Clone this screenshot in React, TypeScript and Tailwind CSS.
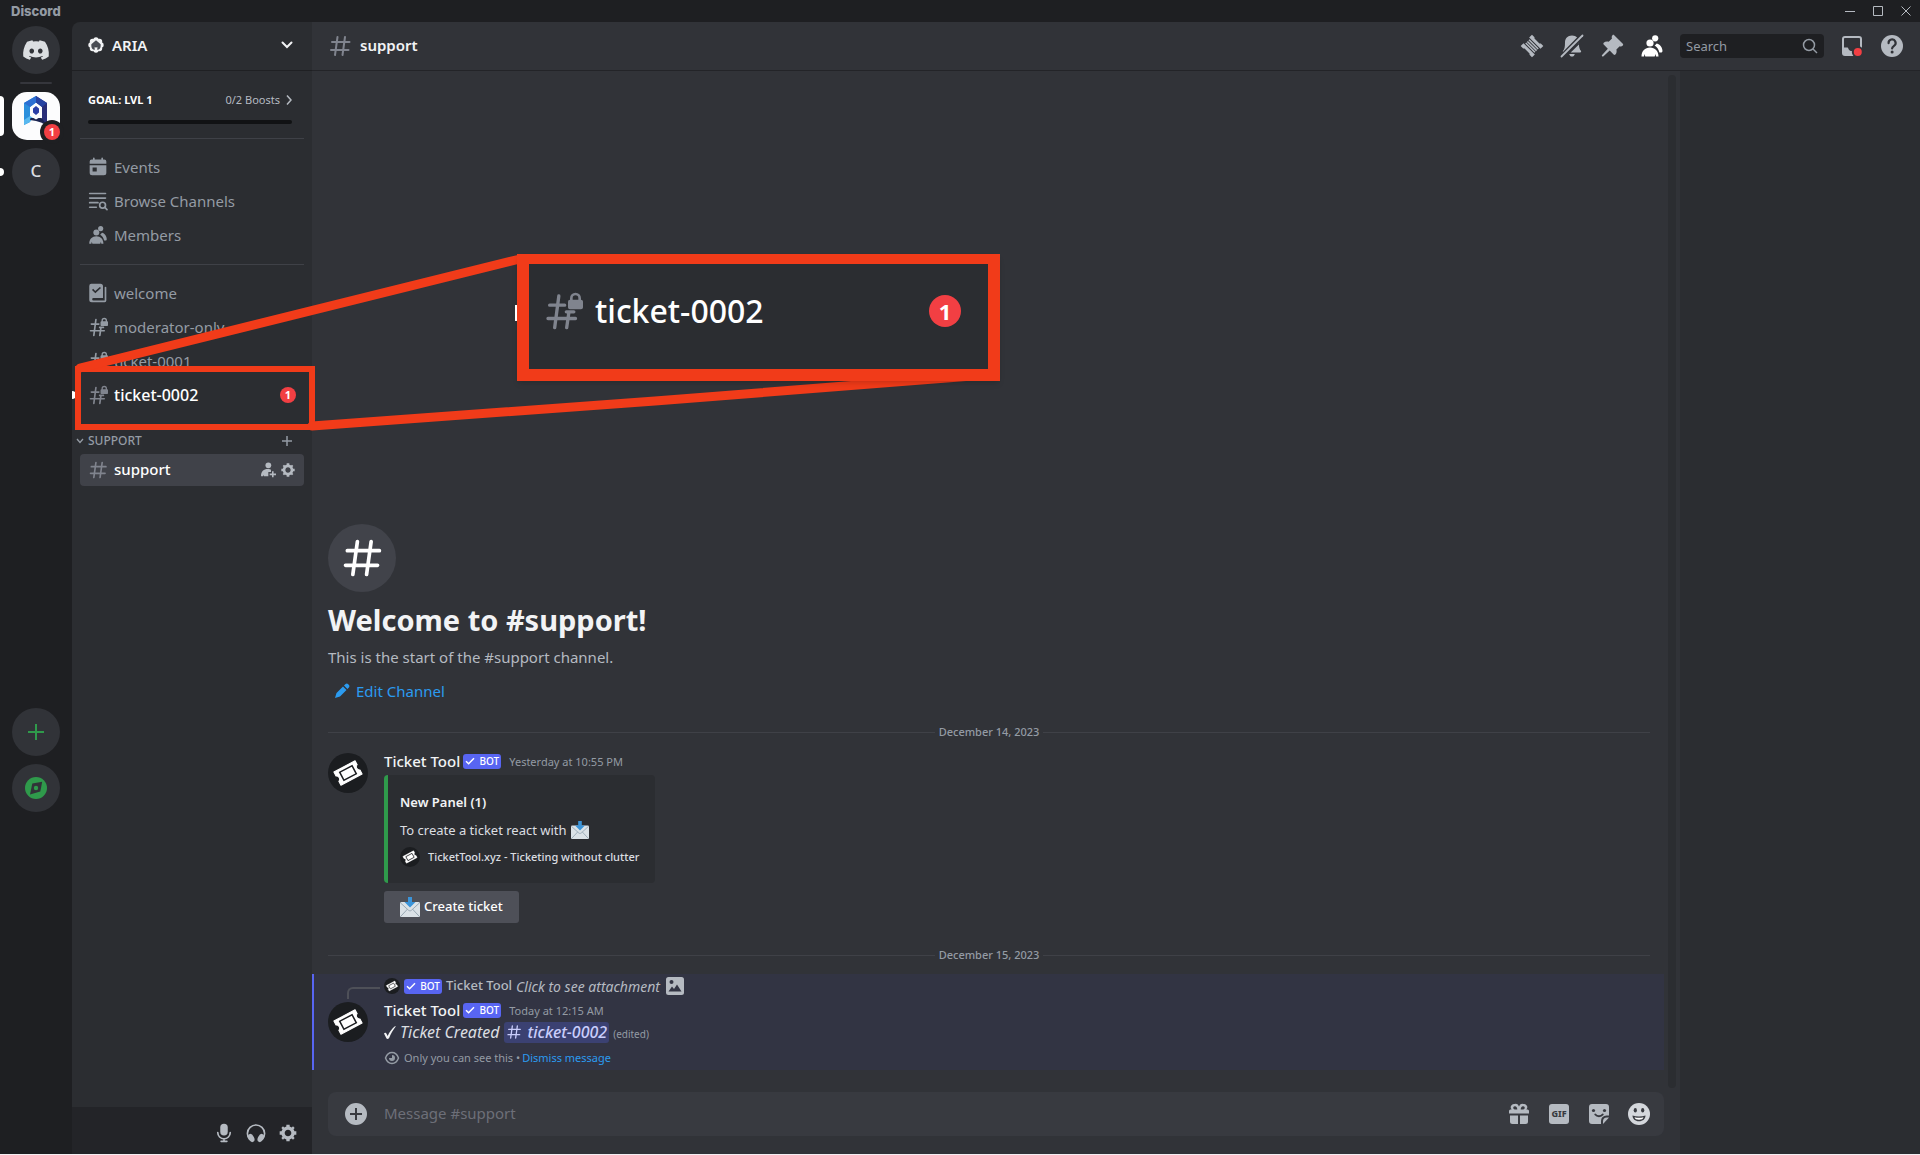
import type { ReactNode } from "react";
import { FaDiscord } from "react-icons/fa";

type IconProps = { className?: string };

function Svg({ className, children, stroke }: { className?: string; children: ReactNode; stroke?: boolean }) {
  return (
    <svg
      viewBox="0 0 24 24"
      className={className}
      aria-hidden="true"
      fill={stroke ? "none" : "currentColor"}
      stroke={stroke ? "currentColor" : "none"}
      strokeWidth={2}
      strokeLinecap="round"
      strokeLinejoin="round"
    >
      {children}
    </svg>
  );
}

const Hash = ({ className }: IconProps) => (
  <Svg className={className} stroke>
    <path d="M9.5 3 7 21M17 3l-2.500 18M4 8h17.500M3 16h17.500" />
  </Svg>
);

const HashLock = ({ className }: IconProps) => (
  <Svg className={className}>
    <g fill="none" stroke="currentColor" strokeWidth="2" strokeLinecap="round">
      <path d="M9.500 3 7 22M15.500 13 14.200 22M4 8.500h9M3 16.500h16.500M14 12.500h4.500" />
    </g>
    <path
      fillRule="evenodd"
      d="M19.500 1a3.300 3.300 0 0 0-3.300 3.300V5.200a1.200 1.200 0 0 0-1.200 1.200v3.300c0 .700.500 1.200 1.200 1.200h6.600c.700 0 1.200-.500 1.200-1.200V6.400c0-.700-.500-1.200-1.200-1.200V4.300A3.300 3.300 0 0 0 19.500 1Zm-1.700 4.200V4.300a1.700 1.700 0 0 1 3.400 0v.900Z"
    />
  </Svg>
);

const Gear = ({ className }: IconProps) => (
  <Svg className={className}>
    <path
      fillRule="evenodd"
      d="M19.738 10H22V14H19.739C19.498 14.931 19.1 15.798 18.565 16.564L20 18L18 20L16.565 18.564C15.797 19.099 14.932 19.498 14 19.738V22H10V19.738C9.069 19.498 8.203 19.099 7.436 18.564L6 20L4 18L5.436 16.564C4.901 15.799 4.502 14.932 4.262 14H2V10H4.262C4.502 9.068 4.9 8.202 5.436 7.436L4 6L6 4L7.436 5.436C8.202 4.9 9.068 4.502 10 4.262V2H14V4.261C14.932 4.502 15.797 4.9 16.565 5.435L18 3.999L20 5.999L18.564 7.436C19.099 8.202 19.498 9.069 19.738 10ZM12 16C14.2091 16 16 14.2091 16 12C16 9.79086 14.2091 8 12 8C9.79086 8 8 9.79086 8 12C8 14.2091 9.79086 16 12 16Z"
    />
  </Svg>
);

const People = ({ className }: IconProps) => (
  <Svg className={className}>
    <circle cx="10" cy="9" r="3.600" />
    <path d="M1.500 22.500c0-5.500 3.500-9 8.500-9s8.500 3.500 8.500 9h-2.500l-.500-2.500-.800 2.500H5.300l-.800-2.500-.500 2.500Z" />
    <circle cx="15.200" cy="4.300" r="3.100" />
    <path d="M14.600 11.600c1.200-.900 1.800-2 2.300-2.200 3 .800 5.600 4 5.600 7.600 0 .900-.600 1.500-1.500 1.500h-1.600c-.800-3.100-2.400-5.500-4.800-6.900Z" />
  </Svg>
);

const Calendar = ({ className }: IconProps) => (
  <Svg className={className}>
    <path d="M6 1.500a1 1 0 0 1 2 0V3h8V1.500a1 1 0 0 1 2 0V3h1.500A2.500 2.500 0 0 1 22 5.500V8H2V5.500A2.500 2.500 0 0 1 4.500 3H6Z" />
    <path
      fillRule="evenodd"
      d="M2 10h20v9a3 3 0 0 1-3 3H5a3 3 0 0 1-3-3Zm3.500 2.500v5h5v-5Z"
    />
  </Svg>
);

const Browse = ({ className }: IconProps) => (
  <Svg className={className} stroke>
    <path d="M2 3h19M2 8.500h19M2 14h10M2 19.500h8" />
    <circle cx="17.500" cy="17" r="3.500" />
    <path d="m20.200 19.700 2.600 2.600" />
  </Svg>
);

const Rules = ({ className }: IconProps) => (
  <Svg className={className}>
    <path
      fillRule="evenodd"
      d="M4 1h11a3 3 0 0 1 3 3v14H6.500a1.500 1.500 0 0 0 0 3H20V5.500a1 1 0 0 1 2 0V21a2 2 0 0 1-2 2H4.500A3 3 0 0 1 1.500 20V3.500A2.500 2.500 0 0 1 4 1Zm.800 7.300 4 4L15.600 6 14.200 4.700 8.700 9.600 6.200 7Z"
    />
  </Svg>
);

const Threads = ({ className }: IconProps) => (
  <Svg className={className}>
    <g transform="rotate(45 12 12)">
      <path d="M4 4h3.500l1 1h7l1-1H20v4H4Z" />
      <path d="M4 16h16v4h-3.500l-1-1h-7l-1 1H4Z" />
      <path d="M5.500 9h13v1.500h-13ZM5.500 11.300h13v1.500h-13ZM5.500 13.600h13v1.500h-13Z" />
    </g>
  </Svg>
);

const BellOff = ({ className }: IconProps) => (
  <Svg className={className}>
    <path d="M12 1.500c4.500 0 7 3.200 7 7v.300L5.500 18.500H3.800c-.800 0-1.300-1-.700-1.700C4.500 15 5 13 5 8.500c0-3.800 2.500-7 7-7Z" />
    <path d="M18.900 10.600c.200 3.300.800 4.900 2 6.200.600.700.100 1.700-.700 1.700H10.700ZM9.200 20h5.600c-.400 1.600-1.400 2.600-2.800 2.600S9.600 21.600 9.200 20Z" />
    <path d="M22.500 1.500 2 22.500" stroke="#313338" strokeWidth="5" />
    <path d="M22.500 1.500 1.500 22.500" stroke="currentColor" strokeWidth="1.800" strokeLinecap="round" />
  </Svg>
);

const Pin = ({ className }: IconProps) => (
  <Svg className={className}>
    <path d="M12.500 1.200c.500-.500 1.200-.500 1.700 0l8.600 8.600c.500.500.500 1.200 0 1.700-.900.900-2.100 1.100-3.100.700l-3.300 3.300c.500 1.800.200 3.700-1 5-.500.500-1.300.500-1.800 0l-3.900-3.900-6.200 5.700c-.400.400-1 .400-1.400 0s-.400-1 0-1.400l5.700-6.200-4.100-4.100c-.500-.500-.500-1.300 0-1.800 1.300-1.200 3.200-1.500 5-1l3.300-3.300c-.500-1-.400-2.400.500-3.300Z" />
  </Svg>
);

const Compass = ({ className }: IconProps) => (
  <Svg className={className}>
    <circle cx="12" cy="12" r="11" />
    <path fill="#313338" d="M8.300 7.600 18.200 5.700l-1.900 9.800L6 18.500Z" />
    <circle cx="12" cy="12" r="2.200" />
  </Svg>
);

const Mic = ({ className }: IconProps) => (
  <Svg className={className}>
    <rect x="7.500" y="1" width="9" height="14" rx="4.500" />
    <path d="M4.500 11.500a7.500 7.500 0 0 0 15 0M12 19v3.200M8.500 22h7" fill="none" stroke="currentColor" strokeWidth="2" strokeLinecap="round" />
  </Svg>
);

const Headphones = ({ className }: IconProps) => (
  <Svg className={className}>
    <path d="M4.300 19.500A10.300 10.300 0 1 1 19.700 19.500" fill="none" stroke="currentColor" strokeWidth="2" />
    <ellipse cx="6.300" cy="18" rx="3.300" ry="5.200" transform="rotate(-28 6.300 18)" />
    <ellipse cx="17.700" cy="18" rx="3.300" ry="5.200" transform="rotate(28 17.700 18)" />
  </Svg>
);

const Invite = ({ className }: IconProps) => (
  <Svg className={className}>
    <circle cx="12.500" cy="5" r="4.300" />
    <path d="M1.500 20.500c0-6 4-10 10-10 2.500 0 4.500.700 5 1.200V15H12.500v6.500H5.800L5.300 19l-.800 2.500h-2c-.600 0-1-.400-1-1Z" />
    <path d="M18 14h2.400v3.300h3.600v2.400h-3.600V23H18v-3.300h-3.500v-2.400H18Z" />
  </Svg>
);

const Inbox = ({ className }: IconProps) => (
  <Svg className={className}>
    <path
      fillRule="evenodd"
      d="M5 2h14a3 3 0 0 1 3 3v14a3 3 0 0 1-3 3H5a3 3 0 0 1-3-3V5a3 3 0 0 1 3-3Zm-1 2.800V13.500h3c.800 0 1.200.500 1.400 1.200.500 1.500 1.900 2.300 3.600 2.300 2 0 3.200-.900 3.700-2.400.2-.700.600-1.100 1.300-1.100h3V4.800a.800.800 0 0 0-.800-.800H4.800a.800.800 0 0 0-.8.800Z"
    />
    <circle cx="17.800" cy="18" r="6" fill="#313338" />
    <circle cx="17.800" cy="18" r="4" fill="#f23f43" />
  </Svg>
);

const Help = ({ className }: IconProps) => (
  <Svg className={className}>
    <circle cx="12" cy="12" r="11" />
    <path d="M8.600 9.200A3.500 3.500 0 1 1 14 11.800c-1.300.900-1.900 1.400-1.900 2.700" fill="none" stroke="#313338" strokeWidth="2.200" strokeLinecap="round" />
    <circle cx="12.100" cy="18" r="1.500" fill="#313338" />
  </Svg>
);

const Gift = ({ className }: IconProps) => (
  <Svg className={className}>
    <path
      fillRule="evenodd"
      d="M7.500 2A3.600 3.600 0 0 1 12 4.500 3.600 3.600 0 0 1 16.500 2 3.300 3.300 0 0 1 19.400 7.500h1.100A1.500 1.500 0 0 1 22 9v2.500H2V9a1.500 1.500 0 0 1 1.500-1.500h1.100A3.300 3.300 0 0 1 7.500 2Zm.200 2.200a1.600 1.600 0 0 0 .400 3.300h2.200c-.100-2-.900-3.500-2.600-3.300Zm8.600 0c-1.700-.200-2.500 1.300-2.600 3.300h2.200a1.600 1.600 0 0 0 .400-3.300Z"
    />
    <path d="M3 13.500h8V22H5.500A2.500 2.500 0 0 1 3 19.500ZM13 13.500h8v6a2.500 2.500 0 0 1-2.500 2.500H13Z" />
  </Svg>
);

const Sticker = ({ className }: IconProps) => (
  <Svg className={className}>
    <path d="M5 2h14a3 3 0 0 1 3 3v8.500h-2.500a5.500 5.500 0 0 0-5.500 5.500v3H5a3 3 0 0 1-3-3V5a3 3 0 0 1 3-3Z" />
    <path d="M16 22v-2.500a4 4 0 0 1 4-4h2Z" />
    <circle cx="6.500" cy="8.500" r="1.600" fill="#383a40" />
    <circle cx="17.500" cy="8.500" r="1.600" fill="#383a40" />
    <path d="M8.300 12.500c1.800 2.300 5.600 2.300 7.400 0" fill="none" stroke="#383a40" strokeWidth="2" strokeLinecap="round" />
  </Svg>
);

const Smile = ({ className }: IconProps) => (
  <Svg className={className}>
    <circle cx="12" cy="12" r="11" fill="#d4d7dc" />
    <ellipse cx="8.300" cy="8.300" rx="1.600" ry="2.300" fill="#383a40" />
    <ellipse cx="15.700" cy="8.300" rx="1.600" ry="2.300" fill="#383a40" />
    <path d="M5.500 13.500c4 1.300 9 1.300 13 0 0 3.300-2.700 5.800-6.500 5.800s-6.500-2.500-6.500-5.800Z" fill="#383a40" />
    <path d="M7.500 15.200c3 .800 6 .800 9 0-.300 1-.900 1.600-1.500 2-2 .600-4 .600-6 0-.600-.400-1.200-1-1.500-2Z" fill="#fff" />
  </Svg>
);

const ServerBadge = ({ className }: IconProps) => (
  <Svg className={className}>
    {[
      [12, 4.5], [17.300, 6.700], [19.500, 12], [17.300, 17.300], [12, 19.500], [6.700, 17.300], [4.500, 12], [6.700, 6.700],
    ].map(([x, y]) => (
      <circle key={`${x}-${y}`} cx={x} cy={y} r="4" />
    ))}
    <path d="M12 5 5 11v2.500C5 17 7 19 10 19.500V14.500h4v5c3-.500 5-2.500 5-6V11Z" fill="#4a4d55" />
  </Svg>
);

const AriaLogo = ({ className }: IconProps) => (
  <svg viewBox="0 0 48 48" className={className} aria-hidden="true">
    <rect width="48" height="48" rx="15" fill="#fcfcfd" />
    <path d="M24 4 12 11v22l6-3V15l6-4.500Z" fill="#2b8fdc" />
    <path d="M24 4 35 11v22l-5-2V15l-6-4.500Z" fill="#2a2e78" />
    <path d="M24 4 12 11l6 4 6-4.500Z" fill="#2c6fd2" />
    <path d="M24 4 35 11l-5 4-6-4.500Z" fill="#2743a3" />
    <path d="M12 28v5l6-3 3-4-3-2Z" fill="#58b8ef" />
    <path d="M21 16.500 24 14l3 2.500v4L24 23l-3-2.500Z" fill="#2b3ea6" />
    <path d="M18.500 26h3l2.500 1.500L26.500 26h3l5.500 7-6-2.500-5-1.500-6-1Z" fill="#1b2450" />
  </svg>
);

const TicketGlyph = ({ className }: IconProps) => (
  <svg viewBox="0 0 40 40" className={className} aria-hidden="true">
    <circle cx="20" cy="20" r="20" fill="#1b1d20" />
    <g transform="rotate(-28 20 20)">
      <path d="M8 12.500h24v4.500a3.200 3.200 0 0 0 0 6v4.500H8V23a3.200 3.200 0 0 0 0-6Z" fill="#fff" stroke="#fff" strokeLinejoin="round" />
      <rect x="13" y="15.500" width="14" height="9" fill="#fff" stroke="#1b1d20" strokeWidth="1.500" />
    </g>
  </svg>
);

const MailEmoji = ({ className }: IconProps) => (
  <svg viewBox="0 0 20 20" className={className} aria-hidden="true">
    <rect x="0" y="5" width="20" height="15" rx="1.500" fill="#dbe2e7" />
    <path d="m.6 19.500 7-7.500M19.400 19.500l-7-7.500M.6 6l8 7.300c.8.700 2 .700 2.800 0L19.400 6" fill="none" stroke="#99a9b5" strokeWidth="1" />
    <path d="M8 0h4v5h3.500L10 10.500 4.500 5H8Z" fill="#3b94d9" />
  </svg>
);

function Divider({ label }: { label: string }) {
  return (
    <div className="mr-[14px] ml-4 flex h-4 items-center gap-1">
      <span className="h-px flex-1 bg-[#3f4147]" />
      <span className="text-[11px] leading-4 font-medium text-[#949ba4]">{label}</span>
      <span className="h-px flex-1 bg-[#3f4147]" />
    </div>
  );
}

function BotTag() {
  return (
    <span className="flex h-[15px] w-[38px] shrink-0 items-center justify-center gap-1 rounded-[3px] bg-[#5865f2] text-[10px] leading-[15px] font-medium text-white">
      <svg viewBox="0 0 10 8" className="h-2 w-2.5" fill="none" stroke="currentColor" strokeWidth="1.500" aria-hidden="true">
        <path d="M1 4.200 3.600 6.700 9 1.300" />
      </svg>
      BOT
    </span>
  );
}

function NavRow({ icon, label, active }: { icon: ReactNode; label: string; active?: boolean }) {
  return (
    <a
      href="#"
      className={
        active
          ? "flex h-8 items-center gap-1.5 px-2 text-[16px] font-medium text-white"
          : "flex h-8 items-center gap-1.5 px-2 text-[15px] text-[#949ba4]"
      }
    >
      {icon}
      <span className="flex-1">{label}</span>
      {active && (
        <span className="flex size-4 items-center justify-center rounded-full bg-[#f23f43] text-[11px] leading-4 font-bold">1</span>
      )}
    </a>
  );
}

function Rail() {
  return (
    <nav aria-label="Servers" className="flex w-[72px] shrink-0 flex-col items-center pt-1">
      <button aria-label="Direct messages" className="flex size-12 items-center justify-center rounded-full bg-[#313338] text-[#dbdee1]">
        <FaDiscord className="size-7" />
      </button>
      <span className="mt-2 h-0.5 w-8 rounded bg-[#35363c]" />
      <div className="relative mt-2 flex w-full justify-center">
        <span className="absolute top-1 left-0 h-10 w-1 rounded-r bg-white" />
        <button aria-label="ARIA" className="relative size-12">
          <AriaLogo className="size-12" />
          <span className="absolute -right-1 -bottom-1 flex size-6 items-center justify-center rounded-full bg-[#1e1f22]">
            <span className="flex size-4 items-center justify-center rounded-full bg-[#f23f43] text-[11px] leading-4 font-bold text-white">1</span>
          </span>
        </button>
      </div>
      <div className="relative mt-2 flex w-full justify-center">
        <span className="absolute top-5 left-0 h-2 w-1 rounded-r bg-white" />
        <button className="size-12 rounded-full bg-[#313338] pb-0.5 text-[17px] font-medium text-[#dbdee1]">C</button>
      </div>
      <div className="mt-[512px] flex flex-col gap-2">
        <button aria-label="Add a server" className="flex size-12 items-center justify-center rounded-full bg-[#313338] text-[#2f9a4b]">
          <svg viewBox="0 0 16 16" className="size-4" stroke="currentColor" strokeWidth="2" aria-hidden="true">
            <path d="M8 0v16M0 8h16" />
          </svg>
        </button>
        <button aria-label="Explore servers" className="flex size-12 items-center justify-center rounded-full bg-[#313338] text-[#2f9a4b]">
          <Compass className="size-6" />
        </button>
      </div>
    </nav>
  );
}

function Sidebar() {
  return (
    <aside className="flex w-60 shrink-0 flex-col rounded-tl-lg bg-[#2b2d31]">
      <button className="flex h-[49px] shrink-0 items-center border-b border-[#1f2023] pr-[19px] pb-0.5 pl-4 text-left text-[15px] font-semibold text-[#f2f3f5]">
        <ServerBadge className="mr-2 size-4" />
        <span className="flex-1">ARIA</span>
        <svg viewBox="0 0 12 8" className="h-2 w-3" fill="none" stroke="currentColor" strokeWidth="2" strokeLinecap="round" aria-hidden="true">
          <path d="m1.500 1.500 4.500 4.500 4.500-4.500" />
        </svg>
      </button>
      <div className="mx-2 border-b border-[#3f4147] px-2 pt-[19px] pb-[14px]">
        <div className="flex items-center text-[11px] leading-5">
          <span className="flex-1 font-bold text-white">GOAL: LVL 1</span>
          <a href="#" className="flex items-center gap-1.5 text-[#b5bac1]">
            0/2 Boosts
            <svg viewBox="0 0 6 10" className="mr-1 h-2.5 w-1.5" fill="none" stroke="currentColor" strokeWidth="1.500" aria-hidden="true">
              <path d="m1 .5 4 4.500-4 4.500" />
            </svg>
          </a>
        </div>
        <div className="mt-2.5 mr-1 h-1 rounded bg-[#111214]" />
      </div>
      <div className="mx-2 mt-3 flex flex-col gap-0.5 border-b border-[#3f4147] pb-[13px]">
        <NavRow icon={<Calendar className="size-5" />} label="Events" />
        <NavRow icon={<Browse className="size-5" />} label="Browse Channels" />
        <NavRow icon={<People className="size-5" />} label="Members" />
      </div>
      <div className="mx-2 mt-3 flex flex-col gap-0.5">
        <NavRow icon={<Rules className="size-5" />} label="welcome" />
        <NavRow icon={<HashLock className="size-5" />} label="moderator-only" />
        <NavRow icon={<HashLock className="size-5" />} label="ticket-0001" />
        <div className="relative">
          <span className="absolute top-3 -left-2 h-2 w-1 rounded-r bg-white" />
          <NavRow icon={<HashLock className="size-5 text-[#80848e]" />} label="ticket-0002" active />
        </div>
      </div>
      <div className="mt-[18px] flex h-6 items-center pr-5 pl-1 text-[#949ba4]">
        <svg viewBox="0 0 8 6" className="mr-1 h-1.5 w-2" fill="none" stroke="currentColor" strokeWidth="1.300" aria-hidden="true">
          <path d="m1 1 3 3.500L7 1" />
        </svg>
        <span className="flex-1 text-[12px] font-medium">SUPPORT</span>
        <button aria-label="Create channel">
          <svg viewBox="0 0 10 10" className="size-2.5" stroke="currentColor" strokeWidth="1.500" aria-hidden="true">
            <path d="M5 0v10M0 5h10" />
          </svg>
        </button>
      </div>
      <div className="mx-2 mt-px flex h-8 items-center gap-1 rounded bg-[#404249] px-2 text-[#b5bac1]">
        <Hash className="mr-0.5 size-5 text-[#80848e]" />
        <a href="#" className="flex-1 pb-0.5 text-[15px] font-medium text-white">support</a>
        <button aria-label="Create invite"><Invite className="size-4" /></button>
        <button aria-label="Edit channel"><Gear className="size-4" /></button>
      </div>
      <div className="mt-auto flex h-[47px] items-start justify-end gap-3 bg-[#232428] pt-4 pr-[14px] text-[#b5bac1]">
        <button aria-label="Mute"><Mic className="size-5" /></button>
        <button aria-label="Deafen"><Headphones className="size-5" /></button>
        <button aria-label="User settings"><Gear className="size-5" /></button>
      </div>
    </aside>
  );
}

function ChatHeader() {
  return (
    <header className="flex h-[49px] shrink-0 items-center gap-4 border-b border-[#232428] bg-[#313338] px-4 text-[#b5bac1]">
      <div className="flex flex-1 items-center gap-2">
        <Hash className="size-6 text-[#80848e]" />
        <h2 className="pb-0.5 text-[15px] font-semibold text-[#f2f3f5]">support</h2>
      </div>
      <button aria-label="Threads"><Threads className="size-6" /></button>
      <button aria-label="Notification settings"><BellOff className="size-6" /></button>
      <button aria-label="Pinned messages"><Pin className="size-6" /></button>
      <button aria-label="Show member list"><People className="size-6 text-white" /></button>
      <label className="flex h-6 w-36 items-center rounded bg-[#1e1f22] px-1.5">
        <input aria-label="Search" placeholder="Search" className="w-0 flex-1 bg-transparent pt-0.5 text-[13px] outline-none placeholder:text-[#949ba4]" />
        <svg viewBox="0 0 16 16" className="size-4" fill="none" stroke="#949ba4" strokeWidth="1.500" aria-hidden="true">
          <circle cx="7" cy="7" r="5.500" />
          <path d="m11 11 4 4" />
        </svg>
      </label>
      <button aria-label="Inbox"><Inbox className="size-6" /></button>
      <button aria-label="Help"><Help className="size-6" /></button>
    </header>
  );
}

function Messages() {
  return (
    <div className="relative flex min-h-0 flex-1 flex-col justify-end pr-4 pb-[22px]">
      <span className="absolute top-1 right-1 bottom-1 w-2 rounded bg-[#2b2d31]" />
      <section className="pl-4">
        <div className="flex size-[68px] items-center justify-center rounded-full bg-[#41434a] text-white">
          <Hash className="size-11" />
        </div>
        <h1 className="mt-2 text-[29px] leading-10 font-bold text-[#f2f3f5]">Welcome to #support!</h1>
        <p className="mt-[7px] text-[15px] leading-5 text-[#b5bac1]">This is the start of the #support channel.</p>
        <button className="mt-2 flex h-8 items-center gap-1.5 pl-1.5 text-[15px] text-[#2b9bf0]">
          <svg viewBox="0 0 16 16" className="size-4" fill="currentColor" aria-hidden="true">
            <path d="M9 3.500 12.500 7 6 13.500 1 15l1.500-5ZM10 2.600l1.600-1.500c.7-.7 1.700-.7 2.400 0l.900.900c.7.700.7 1.700 0 2.400L13.400 6Z" />
          </svg>
          Edit Channel
        </button>
      </section>
      <div className="mt-[17px]"><Divider label="December 14, 2023" /></div>
      <article className="mt-2.5 flex gap-4 pl-4">
        <TicketGlyph className="mt-[3px] size-10 shrink-0" />
        <div>
          <div className="flex h-[22px] items-center">
            <span className="text-[15px] font-medium text-[#f2f3f5]">Ticket Tool</span>
            <span className="mr-2 ml-[3px]"><BotTag /></span>
            <time className="pt-0.5 text-[11px] text-[#949ba4]">Yesterday at 10:55 PM</time>
          </div>
          <div className="mt-[3px] w-fit rounded border-l-4 border-[#2f9a4b] bg-[#2b2d31] pt-[17px] pr-4 pb-4 pl-3">
            <h3 className="text-[13px] leading-5 font-semibold text-[#f2f3f5]">New Panel (1)</h3>
            <p className="mt-2 flex items-center gap-1 text-[13px] leading-5 text-[#dbdee1]">
              To create a ticket react with
              <MailEmoji className="size-[18px]" />
            </p>
            <div className="mt-[7px] flex h-5 items-center gap-2 text-[11px] font-medium text-[#dbdee1]">
              <TicketGlyph className="size-5" />
              TicketTool.xyz - Ticketing without clutter
            </div>
          </div>
          <button className="mt-2 flex h-8 items-center gap-1 rounded-[3px] bg-[#4e5058] px-4 text-[13px] font-medium text-white">
            <MailEmoji className="size-5" />
            Create ticket
          </button>
        </div>
      </article>
      <div className="mt-6"><Divider label="December 15, 2023" /></div>
      <article className="mt-[11px] border-l-2 border-[#5865f2] bg-[#323443] pt-[3px] pb-1 pl-[14px]">
        <div className="flex h-[18px] items-center pl-[19px]">
          <span className="mt-3.5 mr-1 h-3 w-[33px] rounded-tl-md border-t-2 border-l-2 border-[#4e5058]" />
          <TicketGlyph className="mr-1 size-4" />
          <BotTag />
          <span className="ml-1 text-[13px] font-medium text-[#b5bac1]">Ticket Tool</span>
          <a href="#" className="ml-1 text-[14px] text-[#b5bac1] italic">Click to see attachment</a>
          <svg viewBox="0 0 18 18" className="ml-1.5 size-[18px]" aria-hidden="true">
            <rect width="18" height="18" rx="2.500" fill="#b5bac1" />
            <circle cx="5.500" cy="5" r="2" fill="#323443" />
            <path d="M2.500 14.500 6 9.500l2 2.500 3-4.500 4.500 7Z" fill="#323443" />
          </svg>
        </div>
        <div className="mt-1 flex gap-4">
          <TicketGlyph className="mt-[3px] size-10 shrink-0" />
          <div>
            <div className="flex h-[22px] items-center">
              <span className="text-[15px] font-medium text-[#f2f3f5]">Ticket Tool</span>
              <span className="mr-2 ml-[3px]"><BotTag /></span>
              <time className="pt-0.5 text-[11px] text-[#949ba4]">Today at 12:15 AM</time>
            </div>
            <div className="flex h-[22px] items-center text-[16px] leading-[22px] text-[#dbdee1]">
              <svg viewBox="0 0 12 13" className="mr-1 h-[13px] w-3" fill="#f2f3f5" aria-hidden="true">
                <path d="M0 7.500c1-1.200 2-1 2.800.8L3.600 10C5.500 6 8 2.500 11.200 0l.5.500C9 4 6.800 7.800 5 12.200c-1 .9-2 .9-2.500.300Z" />
              </svg>
              <em>Ticket Created</em>
              <a href="#" className="ml-1 flex h-[21px] items-center gap-1.5 rounded-[3px] bg-[#3b4172] px-0.5 font-medium text-[#c9cdfb] italic">
                <Hash className="size-4" />
                ticket-0002
              </a>
              <span className="ml-1 pt-1 text-[10px] text-[#949ba4]">(edited)</span>
            </div>
            <div className="mt-[7px] flex h-4 items-center text-[11px] text-[#949ba4]">
              <svg viewBox="0 0 16 14" className="mr-1 h-3.5 w-4" fill="none" stroke="currentColor" strokeWidth="1.500" aria-hidden="true">
                <path d="M1.500 7C2.800 3.500 5 1.500 8 1.500S13.200 3.500 14.500 7C13.200 10.500 11 12.500 8 12.500S2.800 10.500 1.500 7Z" />
                <path d="M8 4v3H5a3 3 0 1 0 3-3Z" fill="currentColor" stroke="none" />
              </svg>
              Only you can see this •
              <button className="ml-0.5 text-[#2b9bf0]">Dismiss message</button>
            </div>
          </div>
        </div>
      </article>
    </div>
  );
}

function Composer() {
  return (
    <form className="mr-4 mb-[18px] ml-4 flex h-11 shrink-0 items-center gap-4 rounded-lg bg-[#383a40] pr-[13px] pl-4 text-[#b5bac1]">
      <button type="button" aria-label="Attach">
        <Svg className="size-6">
          <path fillRule="evenodd" d="M12 1a11 11 0 1 0 0 22 11 11 0 0 0 0-22Zm-1 5h2v5h5v2h-5v5h-2v-5H6v-2h5Z" />
        </Svg>
      </button>
      <input aria-label="Message #support" placeholder="Message #support" className="w-0 flex-1 bg-transparent pb-0.5 text-[15px] outline-none placeholder:text-[#6d6f78]" />
      <button type="button" aria-label="Send a gift"><Gift className="size-6" /></button>
      <button type="button" className="flex size-6 items-center justify-center">
        <span className="flex size-5 items-center justify-center rounded-[3px] bg-[#b5bac1] text-[9px] leading-5 font-extrabold text-[#383a40]">GIF</span>
      </button>
      <button type="button" aria-label="Stickers"><Sticker className="size-6" /></button>
      <button type="button" aria-label="Emoji"><Smile className="size-6" /></button>
    </form>
  );
}

function Callout() {
  return (
    <div className="pointer-events-none absolute inset-0">
      <div className="absolute top-[366px] left-[75px] h-16 w-60 border-[6px] border-[#f13b19]" />
      <svg className="absolute inset-0 size-full" fill="none" stroke="#f13b19" strokeWidth="9" strokeLinecap="round" aria-hidden="true">
        <path d="M80 368 520 259M312 426 655 401 985 375" />
      </svg>
      <div className="absolute top-[254px] left-[517px] flex h-[127px] w-[483px] items-center border-x-12 border-t-10 border-b-12 border-[#f13b19] bg-[#2b2d31] pr-[27px] pb-3 pl-[14px] text-white shadow-md">
        <span className="absolute top-[41px] -left-[14px] h-4 w-0.5 bg-white" />
        <HashLock className="mr-3 size-10 text-[#80848e]" />
        <span className="flex-1 text-[32px] leading-10 font-medium">ticket-0002</span>
        <span className="flex size-8 items-center justify-center rounded-full bg-[#f23f43] text-[22px] leading-8 font-bold">1</span>
      </div>
    </div>
  );
}

export default function App() {
  return (
    <div className="relative flex h-screen flex-col overflow-hidden border-b border-[#f4eef2] bg-[#1e1f22] font-['Noto_Sans',sans-serif]">
      <div className="flex h-[22px] shrink-0 items-center justify-between pr-[9px] pl-[11px]">
        <span className="pt-0.5 font-['Inter'] text-[13px] font-extrabold text-[#949ba4]">Discord</span>
        <div className="flex gap-[18px] text-[#b5bac1]">
          {["M0 5.500h10", "M.5.500h9v9h-9Z", "m.500.500 9 9M9.500.500l-9 9"].map((d, i) => (
            <button key={d} aria-label={["Minimize", "Maximize", "Close"][i]}>
              <svg viewBox="0 0 10 10" className="size-2.5" fill="none" stroke="currentColor" aria-hidden="true"><path d={d} /></svg>
            </button>
          ))}
        </div>
      </div>
      <div className="flex min-h-0 flex-1">
        <Rail />
        <Sidebar />
        <main className="flex min-w-0 flex-1 flex-col bg-[#313338]">
          <ChatHeader />
          <div className="flex min-h-0 flex-1">
            <div className="flex min-w-0 flex-1 flex-col">
              <Messages />
              <Composer />
            </div>
            <aside aria-label="Members" className="w-60 shrink-0 bg-[#2b2d31]" />
          </div>
        </main>
      </div>
      <Callout />
    </div>
  );
}
